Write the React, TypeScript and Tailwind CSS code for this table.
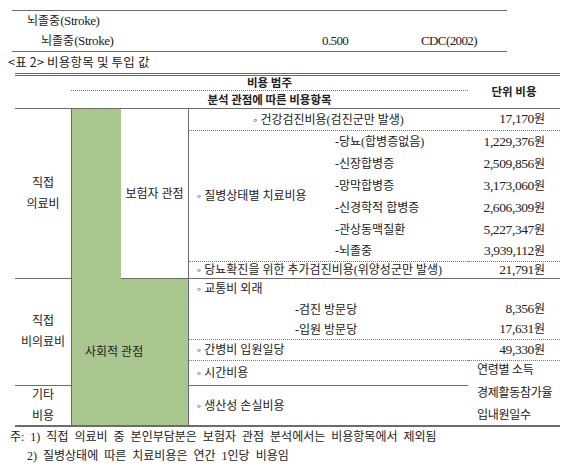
import React from 'react';

const line = 'border-[#6c6c6c]';
const dot = 'border-dotted border-[#7a7a7a]';

const diseaseRows = [
    { name: '-당뇨(합병증없음)', cost: '1,229,376' },
    { name: '-신장합병증', cost: '2,509,856' },
    { name: '-망막합병증', cost: '3,173,060' },
    { name: '-신경학적 합병증', cost: '2,606,309' },
    { name: '-관상동맥질환', cost: '5,227,347' },
    { name: '-뇌졸중', cost: '3,939,112' },
];

function Won({ value }: { value: string }) {
    return (
        <span>
            <span className="text-[13.5px] tracking-[-0.4px]">{value}</span>원
        </span>
    );
}

export default function App() {
    return (
        <div className="w-[567px] h-[474px] bg-white text-[#222] text-[12px] font-['Liberation_Serif','Noto_Sans_CJK_KR',serif] overflow-hidden">
            <div className="h-[10px]" />

            {/* Previous table tail */}
            <div className={`ml-[12px] w-[495px] border-t-[1.5px] border-b-[1.5px] ${line}`}>
                <div className="h-[20px] flex items-center pl-[15px]">
                    뇌졸중<span className="text-[13px] tracking-[-0.4px]">(Stroke)</span>
                </div>
                <div className="h-[20px] flex items-center pl-[29px]">
                    <span className="w-[281px]">
                        뇌졸중<span className="text-[13px] tracking-[-0.4px]">(Stroke)</span>
                    </span>
                    <span className="w-[99px] text-[13px] tracking-[-0.6px]">0.500</span>
                    <span className="text-[13px] tracking-[-0.6px]">CDC(2002)</span>
                </div>
            </div>

            {/* Caption */}
            <div className="ml-[8px] h-[19px] leading-[19px] text-[12.5px] font-['Noto_Sans_CJK_KR',sans-serif] tracking-[0.2px]">
                &lt;표 2&gt; 비용항목 및 투입 값
            </div>

            {/* Cost table */}
            <div
                className={`mt-[2px] ml-[15px] w-[545px] grid grid-cols-[56px_50px_68px_146px_133px_92px] grid-rows-[15px_18px_22px_22px_22px_22px_22px_22px_21px_17px_20px_21px_20px_21px_25px_39px] border-t-[3px] border-double border-b-2 ${line}`}
            >
                {/* header */}
                <div className={`col-start-1 row-start-1 row-span-2 border-b ${line}`} />
                <div className={`col-start-2 col-span-4 row-start-1 flex items-center justify-center border-b ${dot} font-['Noto_Sans_CJK_KR',sans-serif] font-bold text-[11.5px]`}>
                    비용 범주
                </div>
                <div className={`col-start-2 col-span-4 row-start-2 flex items-center justify-center border-b ${line} font-['Noto_Sans_CJK_KR',sans-serif] font-bold text-[11.5px]`}>
                    분석 관점에 따른 비용항목
                </div>
                <div className={`col-start-6 row-start-1 row-span-2 flex items-center justify-center border-b ${line} font-['Noto_Sans_CJK_KR',sans-serif] font-bold text-[11.5px]`}>
                    단위 비용
                </div>

                {/* category column */}
                <div className={`col-start-1 row-start-3 row-span-8 flex flex-col items-center justify-center leading-[21px] border-b ${line}`}>
                    <span>직접</span>
                    <span>의료비</span>
                </div>
                <div className={`col-start-1 row-start-11 row-span-5 flex flex-col items-center justify-center leading-[21px] border-b ${line}`}>
                    <span>직접</span>
                    <span>비의료비</span>
                </div>
                <div className="col-start-1 row-start-16 flex flex-col items-center justify-center leading-[21px]">
                    <span>기타</span>
                    <span>비용</span>
                </div>

                {/* perspective column */}
                <div className={`col-start-2 row-start-3 row-span-8 bg-[#a9c68f] border-l ${line}`} />
                <div className={`col-start-3 row-start-3 row-span-8 flex items-center justify-center border-r border-b ${line}`}>
                    보험자 관점
                </div>
                <div className={`col-start-2 col-span-2 row-start-11 row-span-6 flex items-center pl-[13px] bg-[#a9c68f] border-l border-r ${line}`}>
                    사회적 관점
                </div>

                {/* 건강검진 */}
                <div className={`col-start-4 col-span-2 row-start-3 flex items-center justify-center border-b ${dot}`}>
                    ◦ 건강검진비용(검진군만 발생)
                </div>
                <div className={`col-start-6 row-start-3 flex items-center justify-end pr-[15px] border-b ${dot}`}>
                    <Won value="17,170" />
                </div>

                {/* 질병상태별 */}
                <div className={`col-start-4 row-start-4 row-span-6 flex items-center pl-[8px] border-b ${dot}`}>
                    ◦ 질병상태별 치료비용
                </div>
                {diseaseRows.map((r, i) => (
                    <React.Fragment key={r.name}>
                        <div
                            className={`col-start-5 flex items-center ${i === 5 ? `border-b ${dot}` : ''}`}
                            style={{ gridRowStart: 4 + i }}
                        >
                            {r.name}
                        </div>
                        <div
                            className={`col-start-6 flex items-center justify-end pr-[15px] ${i === 5 ? `border-b ${dot}` : ''}`}
                            style={{ gridRowStart: 4 + i }}
                        >
                            <Won value={r.cost} />
                        </div>
                    </React.Fragment>
                ))}

                {/* 당뇨확진 */}
                <div className={`col-start-4 col-span-2 row-start-10 flex items-center pl-[8px] border-b ${line}`}>
                    ◦ 당뇨확진을 위한 추가검진비용(위양성군만 발생)
                </div>
                <div className={`col-start-6 row-start-10 flex items-center justify-end pr-[15px] border-b ${line}`}>
                    <Won value="21,791" />
                </div>

                {/* 교통비 */}
                <div className="col-start-4 col-span-2 row-start-11 flex items-center pl-[8px]">◦ 교통비 외래</div>
                <div className="col-start-4 col-span-2 row-start-12 flex items-center pl-[106px]">-검진 방문당</div>
                <div className="col-start-6 row-start-12 flex items-center justify-end pr-[15px]">
                    <Won value="8,356" />
                </div>
                <div className={`col-start-4 col-span-2 row-start-13 flex items-center pl-[106px] border-b ${dot}`}>
                    -입원 방문당
                </div>
                <div className={`col-start-6 row-start-13 flex items-center justify-end pr-[15px] border-b ${dot}`}>
                    <Won value="17,631" />
                </div>

                {/* 간병비 */}
                <div className={`col-start-4 col-span-2 row-start-14 flex items-center pl-[8px] border-b ${dot}`}>
                    ◦ 간병비 입원일당
                </div>
                <div className={`col-start-6 row-start-14 flex items-center justify-end pr-[15px] border-b ${dot}`}>
                    <Won value="49,330" />
                </div>

                {/* 시간비용, 생산성 */}
                <div className={`col-start-4 col-span-2 row-start-15 flex items-center pl-[8px] border-b ${line}`}>
                    ◦ 시간비용
                </div>
                <div className="col-start-4 col-span-2 row-start-16 flex items-center pl-[8px]">◦ 생산성 손실비용</div>
                <div className="col-start-6 row-start-15 row-span-2 flex flex-col justify-center pl-[9px] leading-[22.5px] tracking-[-0.3px]">
                    <span>연령별 소득</span>
                    <span>경제활동참가율</span>
                    <span>입내원일수</span>
                </div>
            </div>

            {/* Notes */}
            <div className="pt-[1px] leading-[19px] [word-spacing:3px]">
                <div className="pl-[10px]">주: 1) 직접 의료비 중 본인부담분은 보험자 관점 분석에서는 비용항목에서 제외됨</div>
                <div className="pl-[27px]">2) 질병상태에 따른 치료비용은 연간 1인당 비용임</div>
            </div>
        </div>
    );
}
